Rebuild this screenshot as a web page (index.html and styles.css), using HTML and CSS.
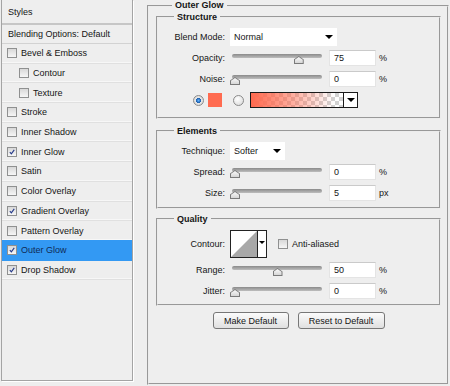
FILE: index.html
```html
<!DOCTYPE html>
<html lang="en">
<head>
    <meta charset="UTF-8">
    <title>Layer Style - Outer Glow</title>
    <link rel="stylesheet" href="styles.css">
</head>
<body>
<div class="dialog">
    <ul class="style-list">
        <li class="head">Styles</li>
        <li class="head blend">Blending Options: Default</li>
        <li><span class="check"></span>Bevel &amp; Emboss</li>
        <li class="sub"><span class="check"></span>Contour</li>
        <li class="sub"><span class="check"></span>Texture</li>
        <li><span class="check"></span>Stroke</li>
        <li><span class="check"></span>Inner Shadow</li>
        <li><span class="check"><svg viewBox="0 0 10 10"><path d="M2.3 5.2 4.2 7.4 7.8 2.4"/></svg></span>Inner Glow</li>
        <li><span class="check"></span>Satin</li>
        <li><span class="check"></span>Color Overlay</li>
        <li><span class="check"><svg viewBox="0 0 10 10"><path d="M2.3 5.2 4.2 7.4 7.8 2.4"/></svg></span>Gradient Overlay</li>
        <li><span class="check"></span>Pattern Overlay</li>
        <li class="selected"><span class="check"><svg viewBox="0 0 10 10"><path d="M2.3 5.2 4.2 7.4 7.8 2.4"/></svg></span>Outer Glow</li>
        <li><span class="check"><svg viewBox="0 0 10 10"><path d="M2.3 5.2 4.2 7.4 7.8 2.4"/></svg></span>Drop Shadow</li>
    </ul>

    <fieldset class="effect">
        <legend>Outer Glow</legend>

        <fieldset class="group structure">
            <legend>Structure</legend>
            <div class="row">
                <label>Blend Mode:</label>
                <div class="select blend-mode">Normal<span class="arrow"></span></div>
            </div>
            <div class="row">
                <label>Opacity:</label>
                <div class="slider" style="--pos: 0.75"><span class="thumb"></span></div>
                <span class="num">75</span><span class="unit">%</span>
            </div>
            <div class="row">
                <label>Noise:</label>
                <div class="slider" style="--pos: 0"><span class="thumb"></span></div>
                <span class="num">0</span><span class="unit">%</span>
            </div>
            <div class="row color-row">
                <span class="radio on"></span>
                <span class="swatch"></span>
                <span class="radio"></span>
                <div class="gradient-pick">
                    <span class="gradient"></span>
                    <span class="drop"><span class="arrow"></span></span>
                </div>
            </div>
        </fieldset>

        <fieldset class="group elements">
            <legend>Elements</legend>
            <div class="row">
                <label>Technique:</label>
                <div class="select technique">Softer<span class="arrow"></span></div>
            </div>
            <div class="row">
                <label>Spread:</label>
                <div class="slider" style="--pos: 0"><span class="thumb"></span></div>
                <span class="num">0</span><span class="unit">%</span>
            </div>
            <div class="row">
                <label>Size:</label>
                <div class="slider" style="--pos: 0"><span class="thumb"></span></div>
                <span class="num">5</span><span class="unit">px</span>
            </div>
        </fieldset>

        <fieldset class="group quality">
            <legend>Quality</legend>
            <div class="row contour-row">
                <label>Contour:</label>
                <div class="contour">
                    <svg class="curve" viewBox="0 0 26 26"><polygon points="0,26 26,0 26,26"/></svg>
                    <span class="drop"><span class="arrow small"></span></span>
                </div>
                <span class="check"></span>
                <span class="check-label">Anti-aliased</span>
            </div>
            <div class="row">
                <label>Range:</label>
                <div class="slider" style="--pos: 0.5"><span class="thumb"></span></div>
                <span class="num">50</span><span class="unit">%</span>
            </div>
            <div class="row">
                <label>Jitter:</label>
                <div class="slider" style="--pos: 0"><span class="thumb"></span></div>
                <span class="num">0</span><span class="unit">%</span>
            </div>
        </fieldset>

        <div class="buttons">
            <button class="button make">Make Default</button>
            <button class="button reset">Reset to Default</button>
        </div>
    </fieldset>
</div>
</body>
</html>
```

FILE: styles.css
```css
body {
    margin: 0;
    background-color: #eeeeee;
    color: #151515;
    font-family: "Liberation Sans", Arial, sans-serif;
    font-size: 9px;
}
.dialog {
    display: flex;
    align-items: flex-start;
}

/* left list of effects */
.style-list {
    list-style: none;
    margin: 0 0 0 1px;
    padding: 0;
    width: 132px;
    height: 381px;
    box-sizing: border-box;
    border: 1px solid #a4a4a4;
    border-top: none;
    box-shadow: 1px 1px 0 #fff;
}
.style-list li {
    display: flex;
    align-items: center;
    height: 19.7px;
    box-sizing: border-box;
    padding-left: 5px;
    border-bottom: 1px solid #e0e0e0;
    box-shadow: inset 0 -1px 0 #f7f7f7;
}
.style-list li.head {
    height: 25px;
    padding-left: 6px;
    border-bottom: 2px solid #c6c6c6;
    box-shadow: none;
}
.style-list li.blend {
    height: 19px;
    border-bottom: 1px solid #d2d2d2;
}
.style-list li.sub {
    padding-left: 17px;
}
.style-list li.selected {
    background-color: #3399f3;
    color: #0f2a55;
    border-bottom-color: #3399f3;
    box-shadow: 0 -1px 0 #3399f3;
}
.style-list .check {
    margin-right: 4px;
}

.check {
    display: inline-block;
    width: 10px;
    height: 10px;
    box-sizing: border-box;
    border: 1px solid #8f9090;
    background: linear-gradient(#d8d8d8, #f6f6f6);
    flex: none;
}
.check svg {
    display: block;
    width: 8px;
    height: 8px;
    fill: none;
    stroke: #253a8a;
    stroke-width: 1.4;
}

/* right side */
.effect {
    margin: 0 0 0 14px;
    padding: 0 6px 0 7px;
    width: 302px;
    height: 385px;
    box-sizing: border-box;
    border: 2px groove #ececec;
}
legend {
    margin-left: 16px;
    padding: 0 3px;
    font-weight: bold;
    line-height: 12px;
}
.effect > legend {
    line-height: 11px;
}
.group {
    margin: 0;
    padding: 5px 0 8px 0;
    border: 2px groove #ececec;
}
.elements {
    margin-top: 6px;
    padding-bottom: 5px;
}
.quality {
    margin-top: 4px;
    padding-bottom: 4px;
}
.row {
    display: flex;
    align-items: center;
    height: 18px;
}
.row + .row {
    margin-top: 3px;
}
.row label {
    width: 67px;
    margin-right: 5px;
    text-align: right;
}

.select {
    position: relative;
    height: 18px;
    box-sizing: border-box;
    padding-left: 4px;
    background-color: #fff;
    display: flex;
    align-items: center;
}
.blend-mode {
    width: 107px;
}
.technique {
    width: 55px;
}
.arrow {
    display: inline-block;
    width: 0;
    height: 0;
    border-left: 4px solid transparent;
    border-right: 4px solid transparent;
    border-top: 4px solid #000;
}
.select .arrow {
    position: absolute;
    right: 4px;
    top: 7px;
}
.arrow.small {
    border-left-width: 3px;
    border-right-width: 3px;
    border-top-width: 3px;
}

.slider {
    position: relative;
    width: 95px;
    height: 18px;
}
.slider::before {
    content: '';
    position: absolute;
    left: 2px;
    right: 3px;
    top: 5px;
    height: 4px;
    border-radius: 2px;
    background: linear-gradient(#8a8a8a, #bdbdbd);
}
.thumb {
    position: absolute;
    top: 7px;
    left: calc(var(--pos) * 85px);
    width: 10px;
    height: 8px;
    background: #7a7a7a;
    clip-path: polygon(50% 0, 100% 45%, 100% 100%, 0 100%, 0 45%);
}
.thumb::after {
    content: '';
    position: absolute;
    inset: 1px;
    background: linear-gradient(#fafafa, #d6d6d6);
    clip-path: polygon(50% 0, 100% 45%, 100% 100%, 0 100%, 0 45%);
}
.num {
    margin-left: 4px;
    width: 47px;
    height: 16px;
    box-sizing: border-box;
    padding-left: 4px;
    line-height: 15px;
    background-color: #fff;
    border: 1px solid #e4e4e4;
    border-top-color: #cacaca;
}
.unit {
    margin-left: 3px;
}

.color-row {
    padding-left: 35px;
}
.radio {
    width: 11px;
    height: 11px;
    box-sizing: border-box;
    border-radius: 50%;
    border: 1px solid #8a8a8a;
    background: radial-gradient(circle at 40% 35%, #fff, #d6d6d6);
    flex: none;
}
.radio.on {
    background: radial-gradient(circle, #5fb2ff 0, #1c5fae 2.3px, #e6e6e6 2.8px, #cfcfcf);
}
.swatch {
    margin-left: 4px;
    width: 14px;
    height: 14px;
    background-color: #ff6b50;
}
.radio + .swatch + .radio {
    margin-left: 11px;
}
.gradient-pick {
    display: flex;
    margin-left: 6px;
    width: 108px;
    height: 16px;
    box-sizing: border-box;
    border: 1px solid #1a1a1a;
}
.gradient {
    flex: 1;
    border-right: 1px solid #1a1a1a;
    background:
        linear-gradient(to right, #ff6a4f 0, rgba(255, 106, 79, 0.55) 45%, rgba(255, 106, 79, 0) 90%),
        conic-gradient(#d2d2d2 25%, #fff 0 50%, #d2d2d2 0 75%, #fff 0) 0 0 / 8px 8px;
}
.drop {
    display: flex;
    align-items: center;
    justify-content: center;
    background-color: #fff;
}
.gradient-pick .drop {
    width: 13px;
}

.contour-row {
    height: 28px;
}
.contour {
    display: flex;
    width: 37px;
    height: 28px;
    box-sizing: border-box;
    border: 1px solid #222;
    background-color: #fff;
}
.curve {
    display: block;
    width: 26px;
    height: 26px;
    border-right: 1px solid #222;
    fill: #a8a8a8;
}
.contour .drop {
    flex: 1;
    align-items: flex-start;
    padding-top: 10px;
}
.contour-row .check {
    margin-left: 11px;
}
.check-label {
    margin-left: 4px;
}

.buttons {
    display: flex;
    justify-content: center;
    gap: 9px;
    margin-top: 6px;
}
.button {
    height: 17px;
    padding: 0;
    font-family: inherit;
    font-size: 9px;
    color: #151515;
    border: 1px solid #777;
    border-radius: 3px;
    background: linear-gradient(#fbfbfb, #e0e0e0);
}
.make {
    width: 76px;
}
.reset {
    width: 87px;
}
```
